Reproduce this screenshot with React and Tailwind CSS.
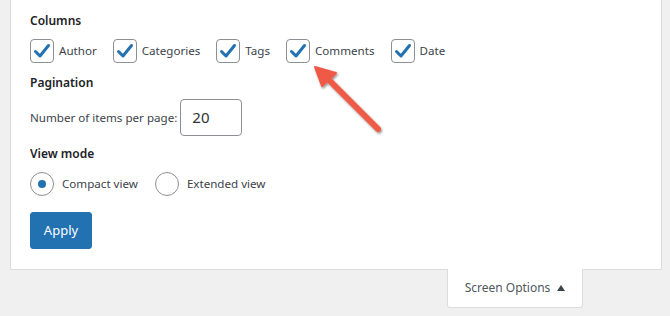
import React from "react";

const columns = ["Author", "Categories", "Tags", "Comments", "Date"];

const Check = () => (
  <span className="w-[24px] h-[24px] shrink-0 rounded-[4px] border border-[#8c8f94] bg-white flex items-center justify-center">
    <svg width="20" height="20" viewBox="0 0 20 20">
      <path d="M3.5 10.5 L8 15 L16.5 4.5" fill="none" stroke="#2271b1" strokeWidth="3" strokeLinecap="round" strokeLinejoin="round" />
    </svg>
  </span>
);

const Radio = ({ on }) => (
  <span className="w-[24px] h-[24px] shrink-0 rounded-full border border-[#8c8f94] bg-white flex items-center justify-center">
    {on && <span className="w-[8px] h-[8px] rounded-full bg-[#2271b1]" />}
  </span>
);

export default function App() {
  return (
    <div
      className="relative w-[670px] h-[316px] bg-[#f0f0f1] overflow-hidden text-[#3c434a]"
      style={{ fontFamily: '"Segoe UI", "Noto Sans", sans-serif' }}
    >
      {/* Screen options panel */}
      <div className="ml-[10px] w-[652px] h-[270px] bg-white border-x border-b border-[#dcdcde] pt-[12px] pl-[19px]">
        <p className="text-[12px] leading-[18px] font-semibold text-[#1d2327]">Columns</p>
        <div className="mt-[9px] flex items-center gap-[16px]">
          {columns.map((c) => (
            <label key={c} className="flex items-center gap-[5px] text-[11.6px]">
              <Check />
              <span>{c}</span>
            </label>
          ))}
        </div>

        <p className="mt-[11px] text-[12px] leading-[18px] font-semibold text-[#1d2327]">Pagination</p>
        <div className="mt-[7px] flex items-center gap-[3px] text-[11.6px]">
          <span>Number of items per page:</span>
          <div className="w-[62px] h-[37px] rounded-[4px] border border-[#8c8f94] flex items-center pl-[11px] text-[15px] text-[#2c3338]">
            20
          </div>
        </div>

        <p className="mt-[9px] text-[12px] leading-[18px] font-semibold text-[#1d2327]">View mode</p>
        <div className="mt-[9px] flex items-center gap-[17px] text-[11.6px]">
          <label className="flex items-center gap-[8px]">
            <Radio on />
            <span>Compact view</span>
          </label>
          <label className="flex items-center gap-[8px]">
            <Radio />
            <span>Extended view</span>
          </label>
        </div>

        <button className="mt-[16px] w-[62px] h-[37px] rounded-[3px] bg-[#2271b1] border border-[#2271b1] text-white text-[13px]">
          Apply
        </button>
      </div>

      {/* Tab */}
      <div className="ml-[447px] -mt-px w-[136px] h-[39px] bg-white border-x border-b border-[#dcdcde] rounded-b-[3px] flex items-center justify-center gap-[7px] text-[12px] text-[#50575e]">
        <span>Screen Options</span>
        <svg width="8" height="6" viewBox="0 0 8 6">
          <polygon points="4,0 8,6 0,6" fill="#3c434a" />
        </svg>
      </div>

      {/* Annotation arrow */}
      <svg className="absolute left-0 top-0" width="670" height="316">
        <defs>
          <filter id="sh" x="-20%" y="-20%" width="140%" height="140%">
            <feDropShadow dx="1" dy="1.5" stdDeviation="1.2" floodColor="#000" floodOpacity="0.45" />
          </filter>
        </defs>
        <g filter="url(#sh)">
          <line x1="378" y1="129" x2="327" y2="78" stroke="#ef5a47" strokeWidth="6" strokeLinecap="round" />
          <polygon points="315,67 336,73 322,86" fill="#ef5a47" stroke="#ef5a47" strokeWidth="2" strokeLinejoin="round" />
        </g>
      </svg>
    </div>
  );
}
